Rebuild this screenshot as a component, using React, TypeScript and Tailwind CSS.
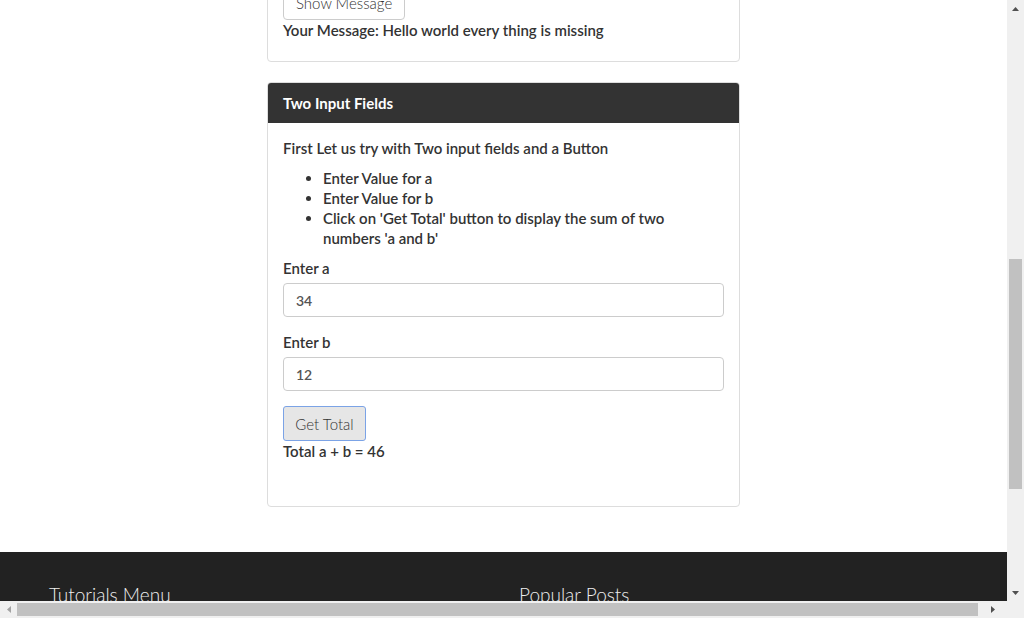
import React from "react";

export default function App() {
  return (
    <div
      className="w-[1024px] h-[618px] flex flex-col overflow-hidden bg-white text-[#333]"
      style={{ fontFamily: "Lato, 'Noto Sans', sans-serif" }}
    >
      <div className="flex flex-1 min-h-0">
        {/* page viewport */}
        <div className="flex-1 min-w-0 overflow-hidden">
          <main className="w-[473px] ml-[267px] -mt-[30px]">
            {/* previous panel, scrolled partly out of view */}
            <div className="border border-[#ddd] rounded px-[15px] pt-[15px] pb-[21px]">
              <button className="h-[34px] px-3 border border-[#ccc] rounded bg-white text-[15px] font-light text-[#333]">
                Show Message
              </button>
              <p className="text-[15px] font-semibold leading-5">
                Your Message: Hello world every thing is missing
              </p>
            </div>

            {/* Two Input Fields panel */}
            <div className="mt-[20px] border border-[#ddd] rounded overflow-hidden">
              <div className="h-[40px] bg-[#333] px-[15px] flex items-center text-white text-[15px] font-bold">
                Two Input Fields
              </div>
              <div className="px-[15px] pt-[15px] pb-[45px] text-[15px] font-semibold leading-5">
                <p className="mb-[10px]">First Let us try with Two input fields and a Button</p>
                <ul className="list-disc pl-[40px] mb-[10px] max-w-[400px]">
                  <li>Enter Value for a</li>
                  <li>Enter Value for b</li>
                  <li>Click on 'Get Total' button to display the sum of two numbers 'a and b'</li>
                </ul>
                <div className="mb-[15px]">
                  <label className="block mb-[5px]">Enter a</label>
                  <input
                    readOnly
                    value="34"
                    className="w-full h-[34px] px-3 border border-[#ccc] rounded text-[14px] font-semibold text-[#555] outline-none"
                  />
                </div>
                <div className="mb-[15px]">
                  <label className="block mb-[5px]">Enter b</label>
                  <input
                    readOnly
                    value="12"
                    className="w-full h-[34px] px-3 border border-[#ccc] rounded text-[14px] font-semibold text-[#555] outline-none"
                  />
                </div>
                <button className="h-[35px] w-[83px] bg-[#e6e6e6] border border-[#7ba3e6] rounded-[3px] text-[15px] font-light text-[#333]">
                  Get Total
                </button>
                <p>Total a + b = 46</p>
              </div>
            </div>
          </main>

          <footer className="mt-[45px] h-[60px] bg-[#222] flex pl-[49px] pt-[31px]">
            <h3 className="w-[470px] text-[19px] font-light text-[#eee] leading-6">Tutorials Menu</h3>
            <h3 className="text-[19px] font-light text-[#eee] leading-6">Popular Posts</h3>
          </footer>
        </div>

        {/* vertical scrollbar */}
        <div className="w-[17px] bg-[#f0f0f0] flex flex-col items-center">
          <div className="h-[17px] flex items-center justify-center">
            <svg width="7" height="4" viewBox="0 0 7 4"><path d="M0 4 L3.5 0 L7 4Z" fill="#505050" /></svg>
          </div>
          <div className="mt-[242px] h-[230px] w-[13px] bg-[#c1c1c1]" />
          <div className="mt-auto h-[17px] flex items-center justify-center">
            <svg width="7" height="4" viewBox="0 0 7 4"><path d="M0 0 L3.5 4 L7 0Z" fill="#505050" /></svg>
          </div>
        </div>
      </div>

      {/* horizontal scrollbar */}
      <div className="h-[17px] flex bg-[#f0f0f0]">
        <div className="flex-1 flex items-center">
          <div className="w-[17px] flex justify-center">
            <svg width="4" height="7" viewBox="0 0 4 7"><path d="M4 0 L0 3.5 L4 7Z" fill="#a3a3a3" /></svg>
          </div>
          <div className="w-[961px] h-[13px] bg-[#c1c1c1]" />
          <div className="flex-1 flex justify-center">
            <svg width="4" height="7" viewBox="0 0 4 7"><path d="M0 0 L4 3.5 L0 7Z" fill="#505050" /></svg>
          </div>
        </div>
        <div className="w-[17px] bg-[#f0f0f0]" />
      </div>
    </div>
  );
}
